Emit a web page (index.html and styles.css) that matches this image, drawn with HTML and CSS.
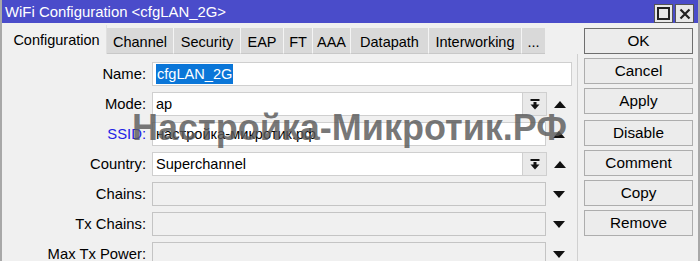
FILE: index.html
```html
<!DOCTYPE html>
<html>
<head>
<meta charset="utf-8">
<link rel="stylesheet" href="styles.css">
</head>
<body>
<div class="window">
  <div class="titlebar">
    <span class="title">WiFi Configuration &lt;cfgLAN_2G&gt;</span>
    <div class="tb-btns">
      <span class="tb-btn"><svg width="13" height="13" viewBox="0 0 13 13"><rect x="1" y="1" width="11" height="11" fill="none" stroke="#222" stroke-width="2"/></svg></span>
      <span class="tb-btn"><svg width="12" height="12" viewBox="0 0 12 12"><path d="M1.5 1.5 L10.5 10.5 M10.5 1.5 L1.5 10.5" stroke="#222" stroke-width="2.2"/></svg></span>
    </div>
  </div>
  <div class="body">
    <div class="main">
      <div class="tabs">
        <span class="tab active t-conf">Configuration</span>
        <span class="tab t-chan">Channel</span>
        <span class="tab t-sec">Security</span>
        <span class="tab t-eap">EAP</span>
        <span class="tab t-ft">FT</span>
        <span class="tab t-aaa">AAA</span>
        <span class="tab t-dp">Datapath</span>
        <span class="tab t-iw">Interworking</span>
        <span class="tab t-more">...</span>
      </div>
      <div class="panel">
        <div class="row">
          <label class="lbl">Name:</label>
          <div class="field w-full"><span class="sel">cfgLAN_2G</span></div>
        </div>
        <div class="row">
          <label class="lbl">Mode:</label>
          <div class="field w-drop">ap</div>
          <span class="dd"><svg width="10" height="11" viewBox="0 0 10 11"><rect x="0.5" y="0" width="9" height="2" fill="#111"/><rect x="3.5" y="3" width="3" height="3" fill="#111"/><path d="M0.5 5.5 H9.5 L5 10.5 Z" fill="#111"/></svg></span>
          <span class="arr"><svg width="12" height="7" viewBox="0 0 12 7"><path d="M0 7 L6 0 L12 7 Z" fill="#111"/></svg></span>
        </div>
        <div class="row">
          <label class="lbl blue">SSID:</label>
          <div class="field w-drop2">настройка-микротик.рф</div>
          <span class="arr"><svg width="12" height="7" viewBox="0 0 12 7"><path d="M0 7 L6 0 L12 7 Z" fill="#111"/></svg></span>
        </div>
        <div class="row">
          <label class="lbl">Country:</label>
          <div class="field w-drop">Superchannel</div>
          <span class="dd"><svg width="10" height="11" viewBox="0 0 10 11"><rect x="0.5" y="0" width="9" height="2" fill="#111"/><rect x="3.5" y="3" width="3" height="3" fill="#111"/><path d="M0.5 5.5 H9.5 L5 10.5 Z" fill="#111"/></svg></span>
          <span class="arr"><svg width="12" height="7" viewBox="0 0 12 7"><path d="M0 7 L6 0 L12 7 Z" fill="#111"/></svg></span>
        </div>
        <div class="row">
          <label class="lbl">Chains:</label>
          <div class="field dis w-drop2"></div>
          <span class="arr"><svg width="12" height="7" viewBox="0 0 12 7"><path d="M0 0 L12 0 L6 7 Z" fill="#111"/></svg></span>
        </div>
        <div class="row">
          <label class="lbl">Tx Chains:</label>
          <div class="field dis w-drop2"></div>
          <span class="arr"><svg width="12" height="7" viewBox="0 0 12 7"><path d="M0 0 L12 0 L6 7 Z" fill="#111"/></svg></span>
        </div>
        <div class="row">
          <label class="lbl">Max Tx Power:</label>
          <div class="field dis w-drop2"></div>
          <span class="arr"><svg width="12" height="7" viewBox="0 0 12 7"><path d="M0 0 L12 0 L6 7 Z" fill="#111"/></svg></span>
        </div>
        <div class="watermark">Настройка-Микротик.РФ</div>
      </div>
    </div>
    <div class="buttons">
      <button class="btn default">OK</button>
      <button class="btn">Cancel</button>
      <button class="btn">Apply</button>
      <button class="btn gap">Disable</button>
      <button class="btn">Comment</button>
      <button class="btn">Copy</button>
      <button class="btn">Remove</button>
    </div>
  </div>
</div>
</body>
</html>
```

FILE: styles.css
```css
* { box-sizing: border-box; }
html, body {
  margin: 0;
  padding: 0;
  width: 700px;
  height: 261px;
  overflow: hidden;
  background: #f0f0f0;
  font-family: "Liberation Sans", Arial, sans-serif;
  font-size: 14.6px;
  color: #000;
}
.window {
  width: 700px;
  height: 261px;
  border-left: 2px solid #a8a8a8;
  border-right: 2px solid #a8a8a8;
  display: flex;
  flex-direction: column;
}
.titlebar {
  height: 25px;
  background: #4a4cca;
  display: flex;
  align-items: center;
  justify-content: space-between;
  padding: 0 4px 0 3px;
}
.title {
  color: #fff;
  font-size: 14.9px;
  padding-top: 1px;
}
.tb-btns { display: flex; gap: 2px; padding-top: 4px; }
.tb-btn {
  width: 19px;
  height: 19px;
  background: #e8e8e8;
  border: 1px solid #555;
  display: flex;
  align-items: center;
  justify-content: center;
}
.body {
  flex: 1;
  display: flex;
  padding-top: 2px;
}
.main {
  width: 576px;
  display: flex;
  flex-direction: column;
  padding-left: 5px;
}
.tabs {
  display: flex;
  height: 29px;
  align-items: flex-end;
  font-size: 14.5px;
}
.tab {
  height: 26px;
  background: #d9d9d9;
  border-left: 1px solid #f4f4f4;
  border-bottom: 1px solid #c8c8c8;
  display: flex;
  align-items: center;
  justify-content: center;
  padding-top: 2px;
  flex: none;
}
.tab.active {
  height: 29px;
  background: #f0f0f0;
  border-left: none;
  border-bottom: none;
  border-right: 1px solid #e0e0e0;
  padding-top: 0;
}
.t-conf { width: 100px; }
.t-chan { width: 66px; border-left: none; }
.t-sec { width: 67px; }
.t-eap { width: 43px; }
.t-ft { width: 29px; }
.t-aaa { width: 38px; }
.t-dp { width: 78px; }
.t-iw { width: 93px; }
.t-more { width: 24px; }
.panel {
  position: relative;
  flex: 1;
  border-right: 1px solid #d0d0d0;
  display: flex;
  flex-direction: column;
  gap: 6px;
  padding-top: 8px;
}
.row {
  display: flex;
  align-items: center;
  height: 24px;
  flex: none;
}
.lbl {
  width: 145px;
  text-align: right;
  padding-right: 6px;
  flex: none;
  font-size: 14.8px;
}
.lbl.blue { color: #2222e6; }
.field {
  height: 24px;
  background: #fff;
  border: 1px solid #cfcfcf;
  display: flex;
  align-items: center;
  padding-left: 3px;
  flex: none;
}
.field.dis { background: #f0f0f0; border-color: #c4c4c4; }
.w-full { width: 420px; }
.w-drop { width: 371px; }
.w-drop2 { width: 394px; }
.sel {
  background: #0a76d8;
  color: #fff;
  padding: 2px 1px;
}
.dd {
  width: 24px;
  height: 24px;
  background: #e9e9e9;
  border: 1px solid #cfcfcf;
  border-left: none;
  display: flex;
  align-items: center;
  justify-content: center;
  flex: none;
}
.arr {
  width: 24px;
  display: flex;
  justify-content: center;
  flex: none;
  padding-left: 1px;
}
.watermark {
  position: absolute;
  left: 125px;
  top: 53px;
  font-family: "Liberation Sans", Arial, sans-serif;
  font-weight: bold;
  font-size: 36px;
  color: rgba(90, 90, 90, 0.82);
  white-space: nowrap;
  pointer-events: none;
}
.buttons {
  display: flex;
  flex-direction: column;
  gap: 4px;
  padding-left: 6px;
  padding-top: 3px;
}
.btn {
  width: 109px;
  height: 26px;
  flex: none;
  font-family: "Liberation Sans", Arial, sans-serif;
  font-size: 15.3px;
  background: #ececec;
  border: 1px solid #adadad;
  color: #000;
  padding: 0;
}
.btn.default { border: 1px solid #6e6e6e; }
.btn.gap { margin-top: 2px; }
```
